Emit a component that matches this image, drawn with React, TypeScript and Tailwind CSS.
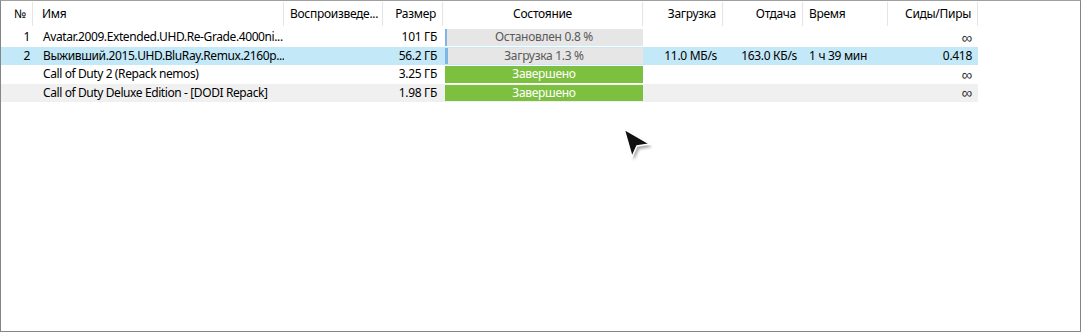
import React from 'react';

type Row = {
  num?: string;
  name: string;
  size: string;
  state: 'stopped' | 'loading' | 'done';
  stateText: string;
  progress: number;
  down?: string;
  up?: string;
  time?: string;
  seeds: string;
  bg: string;
};

const rows: Row[] = [
  { num: '1', name: 'Avatar.2009.Extended.UHD.Re-Grade.4000ni...', size: '101 ГБ', state: 'stopped', stateText: 'Остановлен 0.8 %', progress: 0.8, seeds: '∞', bg: 'bg-white' },
  { num: '2', name: 'Выживший.2015.UHD.BluRay.Remux.2160p...', size: '56.2 ГБ', state: 'loading', stateText: 'Загрузка 1.3 %', progress: 1.3, down: '11.0 МБ/s', up: '163.0 КБ/s', time: '1 ч 39 мин', seeds: '0.418', bg: 'bg-[#c3e8f7]' },
  { name: 'Call of Duty 2 (Repack nemos)', size: '3.25 ГБ', state: 'done', stateText: 'Завершено', progress: 100, seeds: '∞', bg: 'bg-white' },
  { name: 'Call of Duty Deluxe Edition - [DODI Repack]', size: '1.98 ГБ', state: 'done', stateText: 'Завершено', progress: 100, seeds: '∞', bg: 'bg-[#f0f0f0]' },
];

const HeadCell = ({ w, align, children }: { w: string; align: string; children: React.ReactNode }) => (
  <div className={`${w} ${align} h-full flex items-center px-[6px] border-r border-[#e5e5e5] whitespace-nowrap overflow-hidden`}>
    {children}
  </div>
);

const Cursor = () => (
  <svg className="absolute left-[612px] top-[119px]" width="44" height="44" viewBox="0 0 44 44">
    <defs>
      <filter id="sh" x="-50%" y="-50%" width="200%" height="200%">
        <feGaussianBlur stdDeviation="1.6" />
      </filter>
    </defs>
    <polygon points="13,11 39,27 26,29 21,40" fill="#000" opacity="0.35" filter="url(#sh)" />
    <polygon points="11,9 37,24 24,26 19,37" fill="#111" stroke="#fff" strokeWidth="1.6" strokeLinejoin="miter" />
  </svg>
);

export default function App() {
  return (
    <div className="relative w-[1081px] h-[332px] bg-white border border-[#858585] border-t-[#a0a0a0] overflow-hidden text-[12px] tracking-[-0.3px] text-black" style={{ fontFamily: '"Noto Sans", "Liberation Sans", sans-serif' }}>
      <div className="flex h-[27px] items-stretch pb-[2px] pt-[1px]">
        <HeadCell w="w-[32px]" align="justify-end">№</HeadCell>
        <HeadCell w="w-[251px]" align="justify-start pl-[9px]">Имя</HeadCell>
        <HeadCell w="w-[99px]" align="justify-start">Воспроизведе...</HeadCell>
        <HeadCell w="w-[60px]" align="justify-end">Размер</HeadCell>
        <HeadCell w="w-[200px]" align="justify-center">Состояние</HeadCell>
        <HeadCell w="w-[80px]" align="justify-end">Загрузка</HeadCell>
        <HeadCell w="w-[80px]" align="justify-end">Отдача</HeadCell>
        <HeadCell w="w-[85px]" align="justify-start">Время</HeadCell>
        <HeadCell w="w-[90px]" align="justify-end">Сиды/Пиры</HeadCell>
      </div>
      <div className="flex flex-col">
        {rows.map((r, i) => (
          <div key={i} className={`flex h-[18.5px] w-[977px] items-center ${r.bg}`}>
            <div className="w-[32px] text-right pr-[3px]">{r.num}</div>
            <div className="w-[251px] pl-[10px] tracking-[-0.4px] whitespace-nowrap overflow-hidden">{r.name}</div>
            <div className="w-[99px]" />
            <div className="w-[60px] text-right pr-[6px] whitespace-nowrap">{r.size}</div>
            <div className="w-[200px] h-full py-[1px] pl-[2px]">
              {r.state === 'done' ? (
                <div className="h-full bg-[#7dbf3f] text-white flex items-center justify-center">{r.stateText}</div>
              ) : (
                <div className="relative h-full bg-[#e6e6e6] text-[#5a5a5a] flex items-center justify-center">
                  <div className="absolute left-0 top-0 bottom-0 bg-[#7fb4e6]" style={{ width: `${(r.progress / 100) * 198}px` }} />
                  <span className="relative">{r.stateText}</span>
                </div>
              )}
            </div>
            <div className="w-[80px] text-right pr-[6px] whitespace-nowrap">{r.down}</div>
            <div className="w-[80px] text-right pr-[6px] whitespace-nowrap">{r.up}</div>
            <div className="w-[85px] pl-[6px] whitespace-nowrap">{r.time}</div>
            <div className={`w-[90px] text-right pr-[6px] whitespace-nowrap ${r.seeds === '∞' ? 'text-[15px] leading-none text-[#333]' : ''}`}>{r.seeds}</div>
          </div>
        ))}
      </div>
      <Cursor />
    </div>
  );
}
